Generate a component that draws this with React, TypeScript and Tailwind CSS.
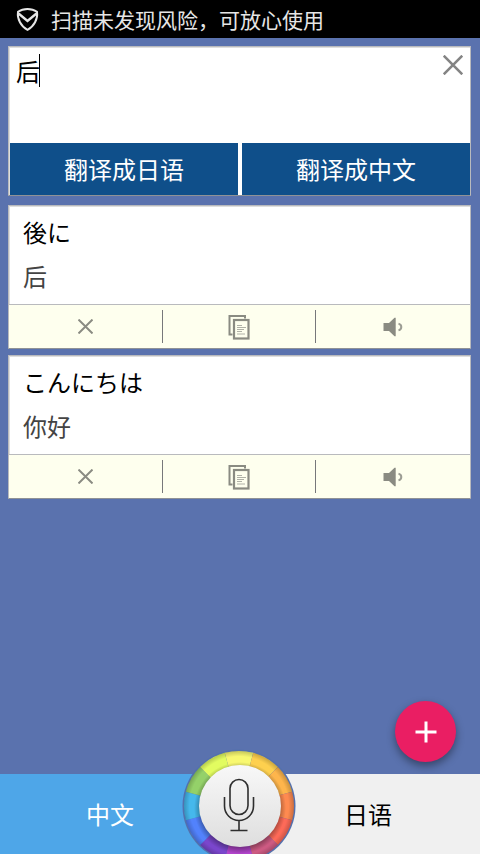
import { useState } from 'react';

interface Entry {
  id: number;
  result: string;
  source: string;
}

const initialEntries: Entry[] = [
  { id: 1, result: '後に', source: '后' },
  { id: 2, result: 'こんにちは', source: '你好' },
];

const wheelColors = [
  '#f8f870', '#fed04e', '#feb54c', '#fe8a50', '#fd6a58', '#cd5a82',
  '#b244cc', '#7a46cc', '#5282fc', '#45b8ec', '#94d169', '#e2fc60',
];

function CrossIcon({ className }: { className: string }) {
  return (
    <svg viewBox="0 0 20 20" className={className} fill="none" stroke="currentColor" aria-hidden="true">
      <path d="M0.7 0.7 19.3 19.3M19.3 0.7 0.7 19.3" strokeWidth="2.6" />
    </svg>
  );
}

function CopyIcon() {
  return (
    <svg viewBox="0 0 22 26" className="w-[22px] h-[26px]" fill="none" stroke="#8a8b82" aria-hidden="true">
      <path d="M17 4.5V2H1.5V20.5H4.5" strokeWidth="2" />
      <rect x="6" y="6" width="14.5" height="18.5" strokeWidth="2.2" />
      <path d="M9 11.5h5M9 13.5h9M9 15.5h7M9 17.5h5M9 20h8" strokeWidth="1" stroke="#b0b1a7" />
    </svg>
  );
}

function SpeakerIcon() {
  return (
    <svg viewBox="0 0 20 20" className="w-5 h-5" aria-hidden="true">
      <path d="M0.5 6H6L11.5 0.8H12.7V19.2H11.5L6 14H0.5Z" fill="#8a8b82" />
      <path d="M15.5 6.6Q18.3 7.4 18.3 10T15.5 13.4" fill="none" stroke="#9c9d94" strokeWidth="2" />
    </svg>
  );
}

function ColorWheel() {
  const point = (deg: number) => {
    const a = (deg * Math.PI) / 180;
    return `${(57 + 55 * Math.sin(a)).toFixed(2)} ${(57 - 55 * Math.cos(a)).toFixed(2)}`;
  };

  return (
    <svg viewBox="0 0 114 114" className="w-full h-full" aria-hidden="true">
      <defs>
        <linearGradient id="disc" x1="0" y1="0" x2="0" y2="1">
          <stop offset="0" stopColor="#f8f8f8" />
          <stop offset="1" stopColor="#dedede" />
        </linearGradient>
        <radialGradient id="rim" cx="57" cy="57" r="55" gradientUnits="userSpaceOnUse">
          <stop offset="0.9" stopColor="#000" stopOpacity="0" />
          <stop offset="1" stopColor="#000" stopOpacity="0.2" />
        </radialGradient>
        <radialGradient id="discShadow" cx="58" cy="59" r="46" gradientUnits="userSpaceOnUse">
          <stop offset="0.84" stopColor="#000" stopOpacity="0.35" />
          <stop offset="1" stopColor="#000" stopOpacity="0" />
        </radialGradient>
      </defs>
      <circle cx="57" cy="57" r="56.5" fill="#5370ad" />
      {wheelColors.map((color, i) => (
        <path key={color} d={`M57 57L${point(i * 30 - 15)}A55 55 0 0 1 ${point(i * 30 + 15)}Z`} fill={color} />
      ))}
      <circle cx="57" cy="57" r="55" fill="url(#rim)" />
      <circle cx="58" cy="59" r="46" fill="url(#discShadow)" />
      <circle cx="58" cy="57" r="41" fill="url(#disc)" />
      <g fill="none" stroke="#2e2e2e" strokeWidth="1.6">
        <rect x="48" y="30.5" width="18" height="35" rx="9" />
        <path d="M42.5 48V57A14.5 14.5 0 0 0 71.5 57V48M57 71.5V81.5M48.5 81.5H65.5" />
      </g>
    </svg>
  );
}

function TranslationCard({ entry, onDelete }: { entry: Entry; onDelete: () => void }) {
  return (
    <article className="bg-white border border-[#b9babd] border-b-[#8f9296] shadow-[inset_1px_1px_0_#dedede]">
      <div className="px-[14px] pt-1 h-[98px] text-2xl">
        <p lang="ja" className="leading-[44px] text-black">{entry.result}</p>
        <p className="leading-[44px] text-[#444]">{entry.source}</p>
      </div>
      <div className="grid grid-cols-3 h-11 py-[5px] bg-[#feffee] border-t border-[#b9babd] text-[#8a8b82]">
        <button onClick={onDelete} aria-label="删除" className="flex items-center justify-center border-r border-[#77787a]">
          <CrossIcon className="w-[15px] h-[15px]" />
        </button>
        <button aria-label="复制" className="flex items-center justify-center border-r border-[#77787a]">
          <CopyIcon />
        </button>
        <button aria-label="朗读" className="flex items-center justify-center">
          <SpeakerIcon />
        </button>
      </div>
    </article>
  );
}

export default function App() {
  const [text, setText] = useState('后');
  const [entries, setEntries] = useState(initialEntries);

  return (
    <div
      lang="zh-CN"
      className="h-screen flex flex-col overflow-hidden bg-[#5a72ae] font-['Noto_Sans_CJK_SC',sans-serif] font-normal"
    >
      <header className="flex items-center gap-3 h-[38px] shrink-0 pl-4 bg-black text-[#e6e6e6]">
        <svg viewBox="0 0 23 24" className="w-[23px] h-6" fill="none" stroke="currentColor" aria-hidden="true">
          <path d="M11.5 2Q17 2 21 4.8C22 12 18 19.5 11.5 22.8C5 19.5 1 12 2 4.8Q6 2 11.5 2Z" strokeWidth="2" />
          <path d="M2.5 6.5 11.5 14 20.5 6.5" strokeWidth="2.4" />
        </svg>
        <p className="text-[21px] leading-[38px] whitespace-nowrap">扫描未发现风险，可放心使用</p>
      </header>

      <main className="relative flex-1 min-h-0 px-2 pt-2">
        <section className="relative mr-px bg-white border border-[#b9babd] border-b-[#8f9296] shadow-[inset_1px_1px_0_#dedede]">
          <textarea
            aria-label="输入文字"
            value={text}
            onChange={(e) => setText(e.target.value)}
            className="block w-full h-24 pl-[7px] pr-12 pt-1 text-2xl leading-[40px] text-black resize-none outline-none bg-transparent caret-transparent"
          />
          <span className="absolute left-[30px] top-[7px] w-px h-[33px] bg-black" />
          <button onClick={() => setText('')} aria-label="清空" className="absolute right-[7px] top-2 text-[#848484]">
            <CrossIcon className="w-5 h-5" />
          </button>
          <div className="grid grid-cols-2 gap-1 pl-px text-2xl text-white">
            <button className="h-[52px] bg-[#0f4f8a]">翻译成日语</button>
            <button className="h-[52px] bg-[#0f4f8a]">翻译成中文</button>
          </div>
        </section>

        <div className="flex flex-col gap-[6px] mt-[9px] mr-px">
          {entries.map((entry) => (
            <TranslationCard
              key={entry.id}
              entry={entry}
              onDelete={() => setEntries(entries.filter((e) => e.id !== entry.id))}
            />
          ))}
        </div>

        <button
          aria-label="添加"
          className="absolute right-6 bottom-3 w-[61px] h-[61px] flex items-center justify-center rounded-full bg-[#ea1e63] shadow-[0_4px_8px_rgba(0,0,0,0.4)]"
        >
          <svg viewBox="0 0 22 22" className="w-[22px] h-[22px]" stroke="#fff" strokeWidth="3" aria-hidden="true">
            <path d="M11 0.5V21.5M0.5 11H21.5" />
          </svg>
        </button>
      </main>

      <footer className="relative grid grid-cols-2 h-20 shrink-0 text-2xl">
        <button className="pr-5 bg-[#4ea6e8] text-white">中文</button>
        <button className="pl-4 bg-[#f0f0f0] text-black">日语</button>
        <button aria-label="语音输入" className="absolute left-1/2 -top-[25px] -ml-[58px] w-[114px] h-[114px] rounded-full">
          <ColorWheel />
        </button>
      </footer>
    </div>
  );
}
